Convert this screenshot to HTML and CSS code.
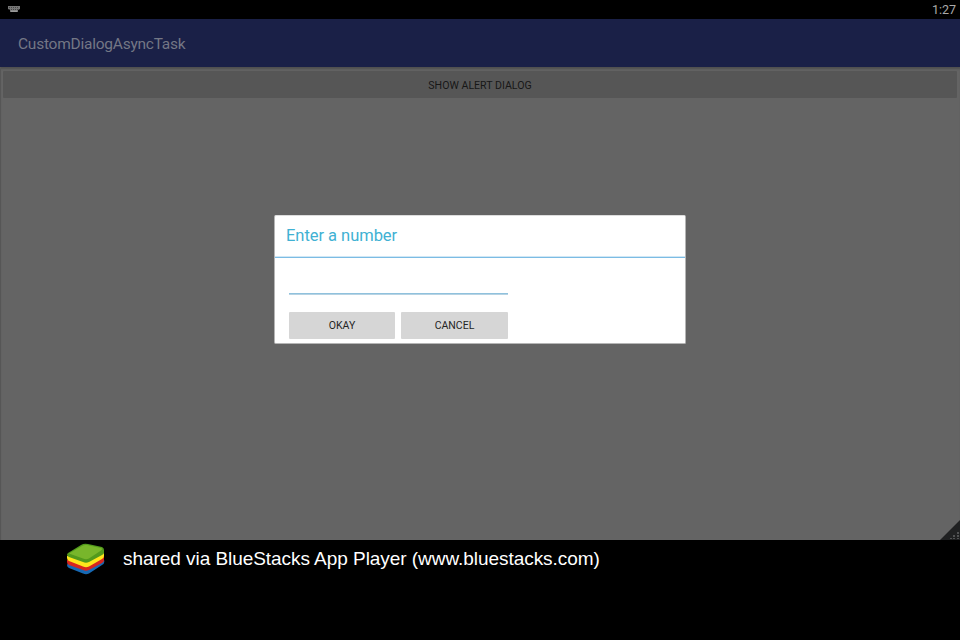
FILE: index.html
```
<!DOCTYPE html>
<html lang="en">
<head>
<meta charset="utf-8">
<title>CustomDialogAsyncTask</title>
<link rel="stylesheet" href="styles.css">
</head>
<body>
<div class="device">
  <div class="status">
    <svg class="keyboard" width="12" height="7" viewBox="0 0 12 7"><path d="M0 0h12v3l-2 1v2H2V4L0 3z" fill="#777"/><path d="M1 1.5h10M1 3.5h10" stroke="#333" stroke-width=".7" stroke-dasharray="1 1"/><path d="M3 5.2h6" stroke="#aaa"/></svg>
    <span class="clock">1:27</span>
  </div>
  <header class="appbar"><h1>CustomDialogAsyncTask</h1></header>
  <main class="content"><button class="show">SHOW ALERT DIALOG</button></main>
  <svg class="grip" width="20" height="20" viewBox="0 0 20 20"><path d="M20 0v20H0z" fill="#202122"/><path d="M1 19 20 0" stroke="#444"/><path d="M17 12h2v2h-2zM13 15h2v2h-2zM17 15h2v2h-2zM10 18h2v1h-2zM13 18h2v1h-2zM17 18h2v1h-2z" fill="#515253"/></svg>
  <section class="dialog">
    <h2>Enter a number</h2>
    <div class="form">
      <input class="number" type="text" aria-label="Number">
      <div class="actions"><button>OKAY</button><button>CANCEL</button></div>
    </div>
  </section>
</div>
<footer class="shared">
  <svg class="logo" width="38" height="33" viewBox="0 0 38 33">
    <path d="M1 20 36 16q2 1 1 4 0 1-2 2L22 30.500q-3 1.500-6 0L2 25q-2-1-2-3z" fill="#1769b4"/>
    <path d="M0 17 37 12v5q0 2-2 3L22 27q-3 1.500-6 0L2 22q-2-1-2-3z" fill="#d7261f"/>
    <path d="M0 13 37 9v4q0 2-2 3L22 23.500q-3 1.500-6 0L2 18q-2-1-2-3z" fill="#ffe51c"/>
    <path d="M1 10 14 2q3-2 7-1l14 3q2 1 2 3v3q0 1-2 2L22 19q-3 1.500-6 0L2 14q-2-1-2-2 0-1 1-2z" fill="#529a1c"/>
    <path d="M2 10.500 15 3q2-1.500 5-1l14 3q2 1 0 2.500L22 15.500q-3 1.500-6 0z" fill="#78b62b"/>
  </svg>
  <span class="caption">shared via BlueStacks App Player (www.bluestacks.com)</span>
</footer>
</body>
</html>
```
FILE: styles.css
```
* { box-sizing: border-box; }
body { margin: 0; width: 960px; height: 640px; overflow: hidden; background: #000; font-family: Roboto, sans-serif; }
h1, h2 { margin: 0; font-weight: 400; }
button { border: 0; padding: 0; border-radius: 1px; font-family: inherit; }
.device { position: relative; height: 540px; display: flex; flex-direction: column; background: #646464; }
.status { height: 19px; display: flex; justify-content: space-between; align-items: center; padding: 0 4px 0 8px; background: #000; }
.keyboard { display: block; }
.clock { color: #aaa; font-size: 12.5px; line-height: 19px; }
.appbar { height: 48px; padding-left: 18px; background: #1a2047; }
.appbar h1 { color: #747785; font-size: 15.5px; letter-spacing: -.24px; line-height: 50px; }
.content { flex: 1; padding: 4px 3px 4px 2px; border-left: 1px solid #565656; box-shadow: inset 0 3px 2px -1px #505050; }
.show { display: block; width: 100%; height: 27px; background: #565656; color: #171717; font-size: 10.6px; line-height: 29px; }
.grip { position: absolute; right: 0; bottom: 0; }
.dialog { position: absolute; left: 274px; top: 215px; width: 412px; height: 129px; background: #fff; border: 1px solid #b5b5b5; border-top-color: #ddd; border-radius: 2px; }
.dialog h2 { height: 42px; padding-left: 11px; border-bottom: 1px solid #7cbce4; box-shadow: inset 0 -1px #d0e7f5; color: #40b1d3; font-size: 16.5px; letter-spacing: -.04px; line-height: 39px; }
.form { width: 233px; padding-left: 14px; }
.number { display: block; width: 219px; height: 37px; padding: 0; border: 0; border-bottom: 1px solid #b7d3e3; box-shadow: inset 0 -1px #8fc1dd; background: transparent; outline: 0; }
.actions { display: grid; grid-template-columns: 106px 107px; gap: 6px; margin-top: 17px; }
.actions button { height: 27px; background: #d6d6d6; color: #252525; font-size: 10.5px; line-height: 27px; }
.shared { height: 100px; display: flex; align-items: flex-start; padding: 3px 0 0 67px; color: #fff; }
.logo { flex: none; }
.caption { margin-left: 18px; padding-top: 5px; font-family: "Liberation Sans", sans-serif; font-size: 19px; letter-spacing: -.05px; line-height: 22px; white-space: nowrap; }
```
